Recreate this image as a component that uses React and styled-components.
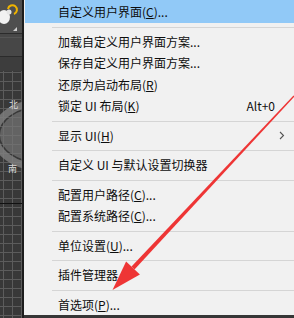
import React from 'react'
import styled, { createGlobalStyle } from 'styled-components';

const Global = createGlobalStyle`
    html, body {
        margin: 0;
        padding: 0;
        background: #363636;
        overflow: hidden;
    }
`;

const Screen = styled.div`
    position: relative;
    display: flex;
    width: 294px;
    height: 318px;
    overflow: hidden;
    font-family: "Noto Sans CJK SC", "Noto Sans", sans-serif;
`;
const Viewport = styled.div`
    width: 24px;
    flex-shrink: 0;
    svg { display: block; }
`;
const Menu = styled.div`
    flex: 1;
    min-width: 0;
    height: 315px;
    background: #f1f1f1;
    padding-left: 1px;
    display: flex;
    flex-direction: column;
`;
const Item = styled.div`
    display: flex;
    align-items: center;
    height: ${p => p.$tall ? '23px' : '21.5px'};
    flex-shrink: 0;
    padding: 0 19px 0 33px;
    background: ${p => p.$active ? '#91c9f7' : 'transparent'};
    font-size: 12px;
    line-height: 1;
    color: #0d0d0d;
    white-space: nowrap;
    u { text-underline-offset: 1px; }
`;
const Shortcut = styled.span`
    margin-left: auto;
    color: #0d0d0d;
`;
const SubArrow = styled.span`
    margin-left: auto;
    margin-right: -10px;
    display: flex;
    svg { display: block; }
`;
const Separator = styled.div`
    height: 8px;
    flex-shrink: 0;
    display: flex;
    align-items: center;
    padding-left: 27px;
    &::after {
        content: '';
        flex: 1;
        height: 1px;
        background: #d5d5d5;
    }
`;
const Overlay = styled.svg`
    position: absolute;
    left: 0;
    top: 0;
    pointer-events: none;
`;

const ViewportArt = () => {
    const rows = [];
    for (let y = 72; y < 318; y += 9) rows.push(y);
    return (
        <svg width="24" height="318" viewBox="0 0 24 318">
            <rect width="24" height="318" fill="#383838" />
            <rect width="24" height="33" fill="#4f4f4f" />
            <ellipse cx="4" cy="17" rx="6" ry="7" fill="#f2f2f2" />
            <circle cx="9" cy="12" r="2.5" fill="#e6e6e6" />
            <path d="M8 9 a4.5 4.5 0 1 1 6 5" stroke="#f0b400" strokeWidth="2" fill="none" />
            <path d="M13 31 L17 27 L17 31 Z" fill="#cfcfcf" />
            <rect y="33" width="24" height="1" fill="#2b2b2b" />
            <rect y="34" width="24" height="22" fill="#474747" />
            <rect y="37" width="24" height="1" fill="#555" />
            <rect y="56" width="24" height="1" fill="#2b2b2b" />
            <rect y="57" width="24" height="14" fill="#3d3d3d" />
            {rows.map(y => <rect key={y} y={y} width="24" height="1" fill="#5c5c5c" />)}
            {[3, 12, 21].map(x => <rect key={x} x={x} y="71" width="1" height="247" fill="#5c5c5c" />)}
            <ellipse cx="40" cy="135" rx="40" ry="27" fill="#767676" opacity="0.7" />
            <ellipse cx="40" cy="135" rx="45" ry="32" stroke="#7c7c7c" strokeWidth="7" fill="none" opacity="0.85" />
            <text x="9" y="108" fontSize="9" fill="#d8d8d8" fontFamily="Noto Sans CJK SC, sans-serif">北</text>
            <text x="8" y="172" fontSize="9" fill="#d8d8d8" fontFamily="Noto Sans CJK SC, sans-serif">南</text>
            <rect y="203" width="24" height="1" fill="#111" />
            <rect x="22" width="2" height="318" fill="#1d1d1d" />
        </svg>
    );
};

const Chevron = () => (
    <svg width="6" height="9" viewBox="0 0 6 9">
        <path d="M1 1 L4.5 4.5 L1 8" stroke="#555" strokeWidth="1.1" fill="none" />
    </svg>
);

const RedArrow = () => (
    <Overlay width="294" height="318" viewBox="0 0 294 318">
        <polygon points="294.5,96.4 293.5,95.6 131.5,266.6 134.5,269.4" fill="#ee3535" />
        <polygon points="112.5,289.9 126.1,261.5 139.9,274.5" fill="#ee3535" />
    </Overlay>
);

export default function App() {
    return (
        <>
            <Global />
            <Screen>
                <Viewport><ViewportArt /></Viewport>
                <Menu>
                    <Item $tall $active>自定义用户界面(<u>C</u>)...</Item>
                    <Separator />
                    <Item>加载自定义用户界面方案...</Item>
                    <Item>保存自定义用户界面方案...</Item>
                    <Item>还原为启动布局(<u>R</u>)</Item>
                    <Item>锁定 UI 布局(<u>K</u>)<Shortcut>Alt+0</Shortcut></Item>
                    <Separator />
                    <Item>显示 UI(<u>H</u>)<SubArrow><Chevron /></SubArrow></Item>
                    <Separator />
                    <Item>自定义 UI 与默认设置切换器</Item>
                    <Separator />
                    <Item>配置用户路径(<u>C</u>)...</Item>
                    <Item>配置系统路径(<u>C</u>)...</Item>
                    <Separator />
                    <Item>单位设置(<u>U</u>)...</Item>
                    <Separator />
                    <Item>插件管理器</Item>
                    <Separator />
                    <Item>首选项(<u>P</u>)...</Item>
                </Menu>
                <RedArrow />
            </Screen>
        </>
    );
}
